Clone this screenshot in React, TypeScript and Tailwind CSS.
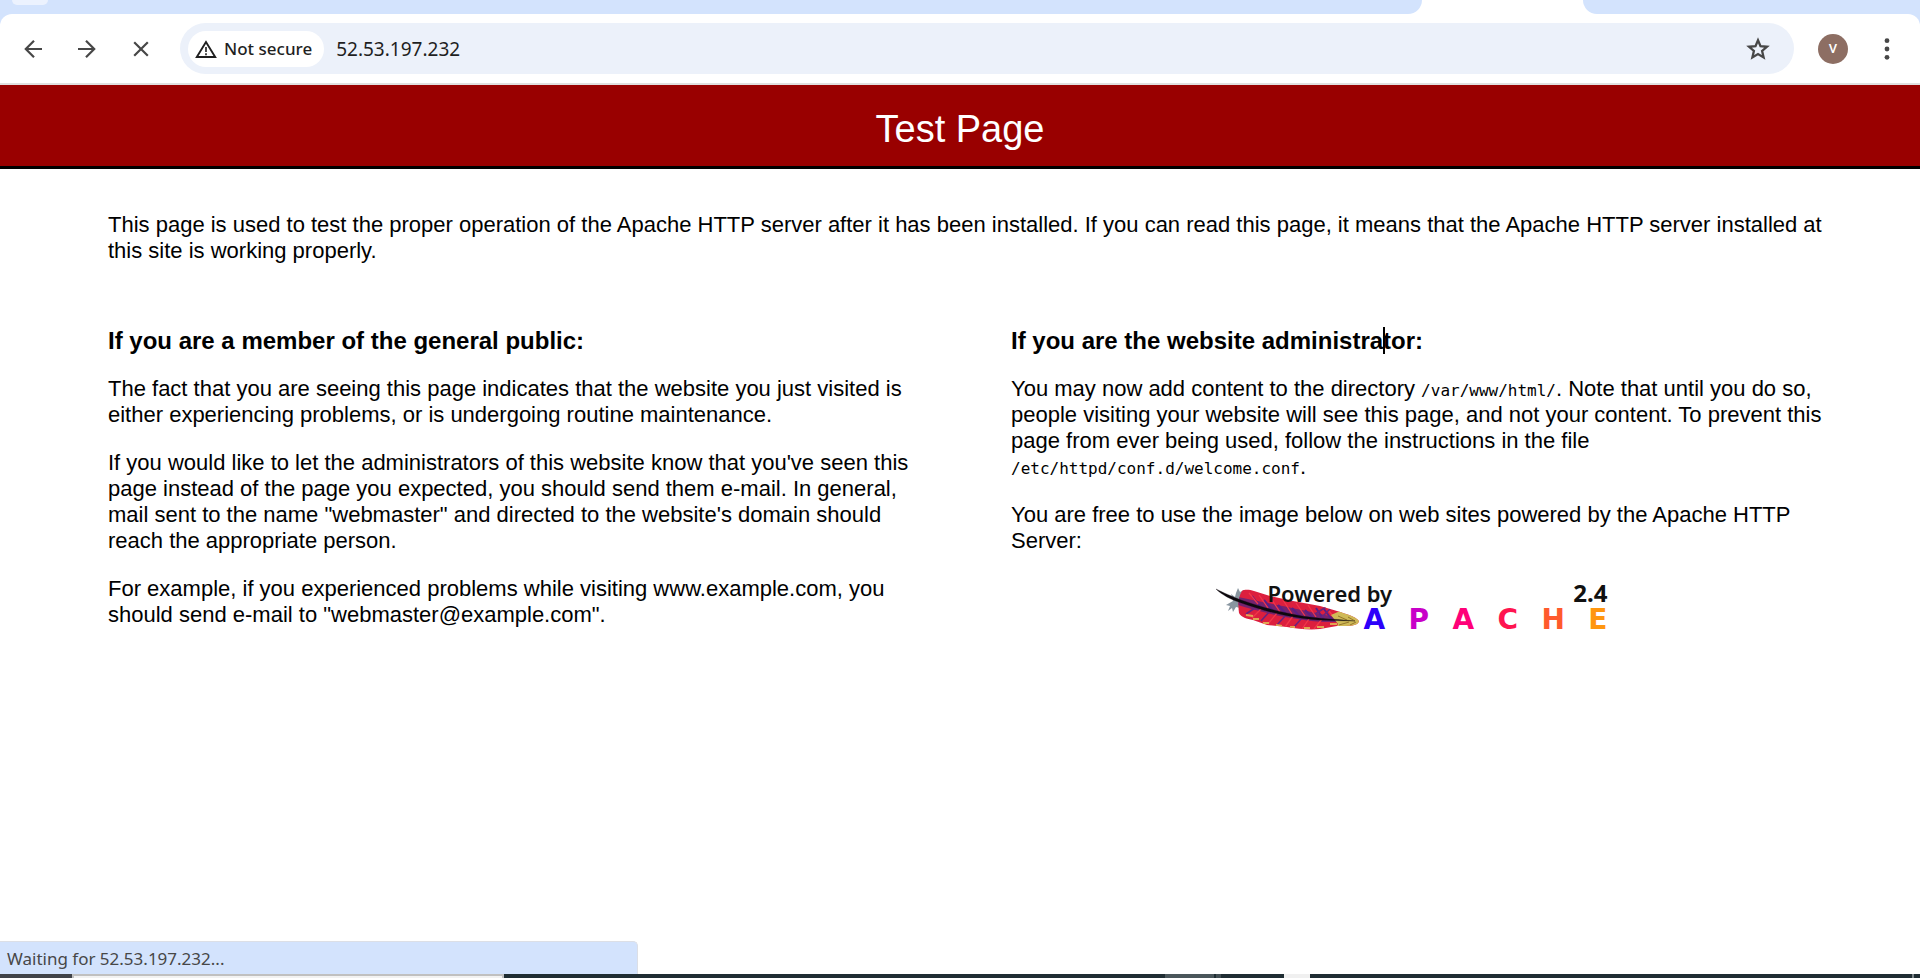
import React from "react";

const letters = [
  { char: "A", tone: "text-[#2c00fa]" },
  { char: "P", tone: "text-[#c800c8]" },
  { char: "A", tone: "text-[#ff0078]" },
  { char: "C", tone: "text-[#ff1450]" },
  { char: "H", tone: "text-[#ff5a2c]" },
  { char: "E", tone: "text-[#ff960f]" },
];

function BackIcon() {
  return (
    <svg width="18" height="18" viewBox="0 0 18 18" fill="none" stroke="#474747" strokeWidth="2.2" aria-hidden="true">
      <path d="M18 9H2M10 0.8L1.8 9L10 17.2" />
    </svg>
  );
}

function ForwardIcon() {
  return (
    <svg width="18" height="18" viewBox="0 0 18 18" fill="none" stroke="#474747" strokeWidth="2.2" aria-hidden="true">
      <path d="M0 9H16M8 0.8L16.2 9L8 17.2" />
    </svg>
  );
}

function StopIcon() {
  return (
    <svg width="16" height="16" viewBox="0 0 16 16" fill="none" stroke="#474747" strokeWidth="2.2" aria-hidden="true">
      <path d="M1.2 1.2L14.8 14.8M14.8 1.2L1.2 14.8" />
    </svg>
  );
}

function WarningIcon() {
  return (
    <svg width="22" height="18" viewBox="0 0 22 18" fill="none" aria-hidden="true">
      <path d="M11 2L1.8 17H20.2Z" stroke="#1f1f1f" strokeWidth="1.9" />
      <path d="M11 7V12M11 13.2V15.2" stroke="#1f1f1f" strokeWidth="1.6" />
    </svg>
  );
}

function StarIcon() {
  return (
    <svg width="24" height="24" viewBox="0 0 24 24" fill="none" stroke="#474747" strokeWidth="2.3" aria-hidden="true">
      <path d="M12 3.2L14.5 9.2L21 9.75L16.1 14L17.6 20.4L12 17L6.4 20.4L7.9 14L3 9.75L9.5 9.2Z" />
    </svg>
  );
}

function Feather() {
  return (
    <svg className="absolute top-3 left-0" width="146" height="44" viewBox="0 0 146 44" aria-hidden="true">
      <defs>
        <clipPath id="vane-shape">
          <path d="M26 3C29 1 34 2 38 3L54 8L77 13L104 18L121 23C130 26 139 28 143 33C142 38 134 38 121 38L104 41C94 42 82 41 71 39L51 37L37 32C31 31 25 29 23 25C22 18 22 9 26 3Z" />
        </clipPath>
      </defs>
      <path d="M20 5L22 0L24 4L28 2L27 12L24 20L20 19L17 24L16 20L12 23L14 18L10 17L17 13L15 6L19 9Z" fill="#8996a0" />
      <g clipPath="url(#vane-shape)">
        <rect width="146" height="44" fill="#dc1f3e" />
        <path d="M22 9C45 14 80 20 122 30L122 34C85 35 45 24 22 17Z" fill="#74236f" />
        <path d="M36 8l9 12M48 12l10 12M62 17l10 11M76 20l9 10M89 22l9 9M100 20l8 12M108 21l8 11" stroke="#5a1f86" strokeWidth="2" />
        <path d="M96 28L110 19M104 31L114 21M30 26L42 18M45 33L54 23M61 37L70 27M78 39L86 30" stroke="#6a237e" strokeWidth="1.6" />
        <path d="M33 5l9 11M43 7l9 13M54 9l10 15M67 12l9 14M80 15l9 13M92 17l8 12M113 23l7 9M36 30l10-10M52 36l9-11M69 39l8-11M86 41l7-10M98 41l8-10" stroke="#f0374a" strokeWidth="1.3" />
        <path d="M30 27l7 1M37 31l6 0M47 35l6 0M60 37l6 1M74 39l5 0M88 40l6 0M101 39l7 0M114 36l7 0" stroke="#e0a552" strokeWidth="1.8" />
        <path d="M115 27L124 23L146 24V42H119L122 36Z" fill="#cfba57" />
        <path d="M122 28l9 4M132 29l7 4M123 37l10-3M134 37l6-3" stroke="#94762c" strokeWidth="1" />
      </g>
      <path d="M0 1C8 5 15 8 25 12C60 24 88 30 122 31.5L139 33L121 32.6C88 33 56 26 24 14.5C15 11.5 6 7 0 1Z" fill="#0c080d" stroke="#0c080d" strokeWidth="0.3" />
    </svg>
  );
}

function ApacheLogo() {
  return (
    <div role="img" aria-label="Powered by Apache 2.4" className="relative mx-auto h-14 w-[404px] pt-[5px] pr-3">
      <Feather />
      <div className="relative flex items-baseline justify-between pl-[52px] font-['Noto_Sans'] text-[22px] leading-[24px] font-semibold text-[#111111]">
        <span>Powered by</span>
        <span className="text-[24px] font-bold">2.4</span>
      </div>
      <div className="relative mt-[3px] flex justify-between pl-[148px] font-['DejaVu_Sans'] text-[28px] leading-[24px] font-bold">
        {letters.map((letter, index) => (
          <span key={index} className={letter.tone}>{letter.char}</span>
        ))}
      </div>
    </div>
  );
}

function Toolbar() {
  return (
    <header className="bg-[#d3e3fd]">
      <div className="flex h-[14px] bg-white">
        <div className="flex-1 rounded-br-[14px] bg-[#d3e3fd] pl-3">
          <div className="h-[5px] w-9 rounded-b-[14px] bg-[#ecf2fe]" />
        </div>
        <div className="ml-[161px] w-[337px] rounded-bl-[14px] bg-[#d3e3fd]" />
      </div>
      <div className="flex h-[71px] items-center rounded-t-[12px] border-b-2 border-[#e0e0e0] bg-white pr-[30px] pl-6">
        <button type="button" aria-label="Back"><BackIcon /></button>
        <button type="button" aria-label="Forward" className="ml-9"><ForwardIcon /></button>
        <button type="button" aria-label="Stop loading" className="ml-[37px]"><StopIcon /></button>
        <div className="ml-[31px] flex h-[51px] flex-1 items-center rounded-full bg-[#ecf1fa] pr-6 pl-2">
          <button type="button" className="flex h-9 items-center gap-[7px] rounded-full bg-white pr-3 pl-[7px] font-['Noto_Sans'] text-[17px] font-medium text-[#1f1f1f]">
            <WarningIcon />
            <span>Not secure</span>
          </button>
          <input
            type="text"
            aria-label="Address"
            defaultValue="52.53.197.232"
            className="ml-3 min-w-0 flex-1 bg-transparent font-['Noto_Sans'] text-[19px] text-[#1f1f1f] outline-none"
          />
          <button type="button" aria-label="Bookmark this page"><StarIcon /></button>
        </div>
        <button type="button" aria-label="Profile" className="ml-6 flex size-[30px] items-center justify-center rounded-full bg-[#8d6e63] font-['Roboto'] text-[13px] font-medium text-white">V</button>
        <button type="button" aria-label="Menu" className="ml-9">
          <svg width="6" height="22" viewBox="0 0 6 22" fill="#474747" aria-hidden="true">
            <circle cx="3" cy="2.7" r="2.4" />
            <circle cx="3" cy="11" r="2.4" />
            <circle cx="3" cy="19.3" r="2.4" />
          </svg>
        </button>
      </div>
    </header>
  );
}

const codeStyle = "font-['DejaVu_Sans_Mono'] text-[16px] leading-none";

export default function App() {
  return (
    <div className="flex min-h-screen flex-col bg-white font-['Liberation_Sans',sans-serif] text-[22px] leading-[26px] text-black">
      <Toolbar />
      <h1 className="border-b-[3px] border-black bg-[#990000] pt-6 pb-[17px] text-center text-[38px] leading-[40px] text-white">Test Page</h1>
      <main className="flex-1 pt-[43px] pr-24 pl-[108px]">
        <p>
          This page is used to test the proper operation of the Apache HTTP server after it has been installed. If you can read this page, it means that the Apache HTTP server installed at this site is working properly.
        </p>
        <div className="mt-16 grid grid-cols-2 gap-[90px]">
          <section className="flex flex-col gap-[22px]">
            <h2 className="text-[24px] font-bold">If you are a member of the general public:</h2>
            <p>The fact that you are seeing this page indicates that the website you just visited is either experiencing problems, or is undergoing routine maintenance.</p>
            <p>If you would like to let the administrators of this website know that you've seen this page instead of the page you expected, you should send them e-mail. In general, mail sent to the name "webmaster" and directed to the website's domain should reach the appropriate person.</p>
            <p>For example, if you experienced problems while visiting www.example.com, you should send e-mail to "webmaster@example.com".</p>
          </section>
          <section className="flex flex-col gap-[22px]">
            <h2 className="text-[24px] font-bold">
              If you are the website administra<span className="relative"><span className="absolute top-0 left-0 h-[27px] w-[2px] bg-black" /></span>tor:
            </h2>
            <p>
              You may now add content to the directory <code className={codeStyle}>/var/www/html/</code>. Note that until you do so, people visiting your website will see this page, and not your content. To prevent this page from ever being used, follow the instructions in the file <code className={codeStyle}>/etc/httpd/conf.d/welcome.conf</code>.
            </p>
            <p>You are free to use the image below on web sites powered by the Apache HTTP Server:</p>
            <ApacheLogo />
          </section>
        </div>
      </main>
      <footer>
        <div role="status" className="h-[33px] w-[638px] rounded-tr-[5px] border-t border-r border-[#dcdfe6] bg-[#d3e3fd] pl-[7px] font-['Noto_Sans'] text-[17px] leading-[34px] text-[#474747]">
          Waiting for 52.53.197.232...
        </div>
        <div className="flex h-1 bg-[#1f2d33]">
          <div className="w-[72px] bg-[#404349]" />
          <div className="w-[432px] border-x-2 border-t-2 border-[#c0c0c0] bg-[#f2f2f2]" />
          <div className="ml-[661px] w-[49px] bg-[#4a565b]" />
          <div className="ml-[2px] w-[5px] bg-[#414d52]" />
          <div className="ml-[63px] w-[26px] bg-[#f0f0f0]" />
          <div className="mr-[6px] ml-auto w-[2px] bg-[#7d868a]" />
        </div>
      </footer>
    </div>
  );
}
